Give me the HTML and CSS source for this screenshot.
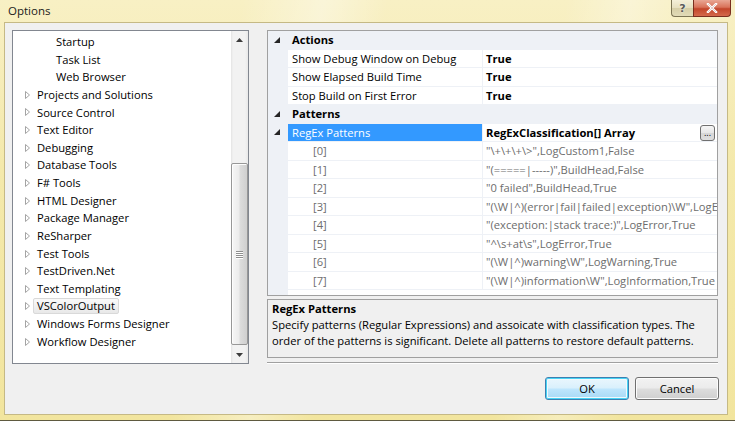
FILE: index.html
```html
<!DOCTYPE html>
<html>
<head>
<meta charset="utf-8">
<link rel="stylesheet" href="styles.css">
</head>
<body>
<div class="window">
  <div class="titlebar">
    <span class="title">Options</span>
    <div class="caption-btns">
      <div class="cbtn help">?</div>
      <div class="cbtn close">
        <svg width="12" height="10" viewBox="0 0 12 10"><path d="M2 1 L10 9 M10 1 L2 9" stroke="#fff" stroke-width="2.4" stroke-linecap="square"/><path d="M2 1 L10 9 M10 1 L2 9" stroke="#6b1d12" stroke-width="0.6" opacity="0.35"/></svg>
      </div>
    </div>
  </div>
  <div class="client">
    <div class="main">
      <div class="tree">
        <ul class="tree-list">
          <li class="tnode child">Startup</li>
          <li class="tnode child">Task List</li>
          <li class="tnode child">Web Browser</li>
          <li class="tnode"><span class="exp"><svg width="5" height="8" viewBox="0 0 5 8"><polygon points="0.5,0.5 4.5,4 0.5,7.5" fill="#fff" stroke="#a4a4a4"/></svg></span><span class="lbl">Projects and Solutions</span></li>
          <li class="tnode"><span class="exp"><svg width="5" height="8" viewBox="0 0 5 8"><polygon points="0.5,0.5 4.5,4 0.5,7.5" fill="#fff" stroke="#a4a4a4"/></svg></span><span class="lbl">Source Control</span></li>
          <li class="tnode"><span class="exp"><svg width="5" height="8" viewBox="0 0 5 8"><polygon points="0.5,0.5 4.5,4 0.5,7.5" fill="#fff" stroke="#a4a4a4"/></svg></span><span class="lbl">Text Editor</span></li>
          <li class="tnode"><span class="exp"><svg width="5" height="8" viewBox="0 0 5 8"><polygon points="0.5,0.5 4.5,4 0.5,7.5" fill="#fff" stroke="#a4a4a4"/></svg></span><span class="lbl">Debugging</span></li>
          <li class="tnode"><span class="exp"><svg width="5" height="8" viewBox="0 0 5 8"><polygon points="0.5,0.5 4.5,4 0.5,7.5" fill="#fff" stroke="#a4a4a4"/></svg></span><span class="lbl">Database Tools</span></li>
          <li class="tnode"><span class="exp"><svg width="5" height="8" viewBox="0 0 5 8"><polygon points="0.5,0.5 4.5,4 0.5,7.5" fill="#fff" stroke="#a4a4a4"/></svg></span><span class="lbl">F# Tools</span></li>
          <li class="tnode"><span class="exp"><svg width="5" height="8" viewBox="0 0 5 8"><polygon points="0.5,0.5 4.5,4 0.5,7.5" fill="#fff" stroke="#a4a4a4"/></svg></span><span class="lbl">HTML Designer</span></li>
          <li class="tnode"><span class="exp"><svg width="5" height="8" viewBox="0 0 5 8"><polygon points="0.5,0.5 4.5,4 0.5,7.5" fill="#fff" stroke="#a4a4a4"/></svg></span><span class="lbl">Package Manager</span></li>
          <li class="tnode"><span class="exp"><svg width="5" height="8" viewBox="0 0 5 8"><polygon points="0.5,0.5 4.5,4 0.5,7.5" fill="#fff" stroke="#a4a4a4"/></svg></span><span class="lbl">ReSharper</span></li>
          <li class="tnode"><span class="exp"><svg width="5" height="8" viewBox="0 0 5 8"><polygon points="0.5,0.5 4.5,4 0.5,7.5" fill="#fff" stroke="#a4a4a4"/></svg></span><span class="lbl">Test Tools</span></li>
          <li class="tnode"><span class="exp"><svg width="5" height="8" viewBox="0 0 5 8"><polygon points="0.5,0.5 4.5,4 0.5,7.5" fill="#fff" stroke="#a4a4a4"/></svg></span><span class="lbl">TestDriven.Net</span></li>
          <li class="tnode"><span class="exp"><svg width="5" height="8" viewBox="0 0 5 8"><polygon points="0.5,0.5 4.5,4 0.5,7.5" fill="#fff" stroke="#a4a4a4"/></svg></span><span class="lbl">Text Templating</span></li>
          <li class="tnode"><span class="exp"><svg width="5" height="8" viewBox="0 0 5 8"><polygon points="0.5,0.5 4.5,4 0.5,7.5" fill="#fff" stroke="#a4a4a4"/></svg></span><span class="lbl sel">VSColorOutput</span></li>
          <li class="tnode"><span class="exp"><svg width="5" height="8" viewBox="0 0 5 8"><polygon points="0.5,0.5 4.5,4 0.5,7.5" fill="#fff" stroke="#a4a4a4"/></svg></span><span class="lbl">Windows Forms Designer</span></li>
          <li class="tnode"><span class="exp"><svg width="5" height="8" viewBox="0 0 5 8"><polygon points="0.5,0.5 4.5,4 0.5,7.5" fill="#fff" stroke="#a4a4a4"/></svg></span><span class="lbl">Workflow Designer</span></li>
        </ul>
        <div class="vscroll">
          <div class="sb-arrow"><svg width="7" height="4" viewBox="0 0 7 4"><polygon points="3.5,0 7,4 0,4" fill="#3c3c3c"/></svg></div>
          <div class="sb-track">
            <div class="sb-thumb"><div class="grip"><i></i><i></i><i></i><i></i></div></div>
          </div>
          <div class="sb-arrow"><svg width="7" height="4" viewBox="0 0 7 4"><polygon points="0,0 7,0 3.5,4" fill="#3c3c3c"/></svg></div>
        </div>
      </div>
      <div class="right">
        <div class="pgrid">
          <div class="prow cat">
            <div class="pm"><svg width="6" height="6" viewBox="0 0 6 6"><polygon points="6,0 6,6 0,6" fill="#262626"/></svg></div>
            <div class="pn">Actions</div>
          </div>
          <div class="prow">
            <div class="pm"></div>
            <div class="pn">Show Debug Window on Debug</div>
            <div class="pv b">True</div>
          </div>
          <div class="prow">
            <div class="pm"></div>
            <div class="pn">Show Elapsed Build Time</div>
            <div class="pv b">True</div>
          </div>
          <div class="prow">
            <div class="pm"></div>
            <div class="pn">Stop Build on First Error</div>
            <div class="pv b">True</div>
          </div>
          <div class="prow cat">
            <div class="pm"><svg width="6" height="6" viewBox="0 0 6 6"><polygon points="6,0 6,6 0,6" fill="#262626"/></svg></div>
            <div class="pn">Patterns</div>
          </div>
          <div class="prow">
            <div class="pm"><svg width="6" height="6" viewBox="0 0 6 6"><polygon points="6,0 6,6 0,6" fill="#262626"/></svg></div>
            <div class="pn selected">RegEx Patterns</div>
            <div class="pv b">RegExClassification[] Array<span class="dots">...</span></div>
          </div>
          <div class="prow ro"><div class="pm"></div><div class="pn sub">[0]</div><div class="pv">"\+\+\+\&gt;",LogCustom1,False</div></div>
          <div class="prow ro"><div class="pm"></div><div class="pn sub">[1]</div><div class="pv">"(=====|-----)",BuildHead,False</div></div>
          <div class="prow ro"><div class="pm"></div><div class="pn sub">[2]</div><div class="pv">"0 failed",BuildHead,True</div></div>
          <div class="prow ro"><div class="pm"></div><div class="pn sub">[3]</div><div class="pv">"(\W|^)(error|fail|failed|exception)\W",LogError,True</div></div>
          <div class="prow ro"><div class="pm"></div><div class="pn sub">[4]</div><div class="pv">"(exception:|stack trace:)",LogError,True</div></div>
          <div class="prow ro"><div class="pm"></div><div class="pn sub">[5]</div><div class="pv">"^\s+at\s",LogError,True</div></div>
          <div class="prow ro"><div class="pm"></div><div class="pn sub">[6]</div><div class="pv">"(\W|^)warning\W",LogWarning,True</div></div>
          <div class="prow ro"><div class="pm"></div><div class="pn sub">[7]</div><div class="pv">"(\W|^)information\W",LogInformation,True</div></div>
          <div class="pfill"><div class="pm"></div><div class="pn"></div><div class="pv"></div></div>
        </div>
        <div class="desc">
          <div class="desc-title">RegEx Patterns</div>
          <div class="desc-text">Specify patterns (Regular Expressions) and assoicate with classification types. The<br>order of the patterns is significant. Delete all patterns to restore default patterns.</div>
        </div>
        <div class="sep"></div>
      </div>
    </div>
    <div class="footer">
      <button class="btn default">OK</button>
      <button class="btn">Cancel</button>
    </div>
  </div>
</div>
</body>
</html>
```

FILE: styles.css
```css
* { box-sizing: border-box; }
html, body { margin: 0; padding: 0; }
body {
  width: 735px;
  height: 421px;
  overflow: hidden;
  font-family: "Open Sans", "Noto Sans", sans-serif;
  font-size: 11.2px;
  color: #000;
  background: #f3e8a8;
}
.window {
  width: 735px;
  height: 421px;
  display: flex;
  flex-direction: column;
  padding: 0 7px 5px 4px;
  border-bottom: 1px solid #5f5a40;
  background:
    linear-gradient(100deg, rgba(255,255,255,0) 30%, rgba(255,255,255,0.35) 40%, rgba(255,255,255,0) 48%, rgba(255,255,255,0) 70%, rgba(255,255,255,0.3) 78%, rgba(255,255,255,0) 86%),
    linear-gradient(180deg, #f8f0c4 0%, #f4e9ab 40%, #f2e59e 100%);
}
.titlebar {
  height: 22px;
  flex: none;
  display: flex;
  align-items: flex-start;
}
.title {
  padding: 3px 0 0 4px;
  font-size: 11.5px;
  line-height: 16px;
  color: #1a1a1a;
}
.caption-btns {
  margin-left: auto;
  margin-right: -3px;
  display: flex;
}
.cbtn {
  height: 17px;
  border: 1px solid #7c7454;
  border-top: none;
  display: flex;
  align-items: center;
  justify-content: center;
}
.help {
  width: 22px;
  border-radius: 0 0 0 4px;
  border-right: none;
  background: linear-gradient(180deg, #f4efd8 0%, #e6dfbf 50%, #d6cea6 51%, #e2dbb8 100%);
  color: #5a5a5a;
  font-family: "DejaVu Sans", sans-serif;
  font-size: 11px;
  font-weight: bold;
  text-shadow: 0 0 2px #fff;
}
.close {
  width: 38px;
  border-radius: 0 0 4px 0;
  background: linear-gradient(180deg, #e9a794 0%, #d9735a 45%, #c2452a 55%, #d4694b 100%);
  border-color: #7a2e1e;
}
.client {
  flex: 1;
  background: #f0f0f0;
  border: 1px solid #c5b985;
  padding: 7px 9px 0 7px;
  display: flex;
  flex-direction: column;
}
.main {
  display: flex;
  gap: 18px;
  height: 334px;
}
.tree {
  width: 237px;
  height: 334px;
  border: 1px solid #828790;
  background: #fff;
  display: flex;
}
.tree-list {
  list-style: none;
  margin: 0;
  padding: 2px 0 0 0;
  flex: 1;
}
.tnode {
  height: 17.65px;
  line-height: 17.65px;
  display: flex;
  align-items: center;
  white-space: nowrap;
}
.tnode.child { padding-left: 43px; }
.exp {
  width: 24px;
  padding-left: 12px;
  display: flex;
  align-items: center;
}
.lbl {
  padding: 0 3px 0 0;
}
.lbl.sel {
  margin-left: -4px;
  padding: 0 3px 0 3px;
  line-height: 14px;
  border: 1px solid #d9d9d9;
  border-radius: 2px;
  background: linear-gradient(180deg, #fafafa, #e8e8e8);
}
.vscroll {
  width: 17px;
  display: flex;
  flex-direction: column;
  background: linear-gradient(90deg, #e3e3e3 0, #f2f2f2 2px, #f2f2f2 14px, #e8e8e8 17px);
}
.sb-arrow {
  height: 17px;
  display: flex;
  align-items: center;
  justify-content: center;
}
.sb-track {
  flex: 1;
  display: flex;
  flex-direction: column;
  justify-content: flex-end;
  padding-bottom: 1px;
}
.sb-thumb {
  height: 182px;
  margin: 0 0 0 0;
  border: 1px solid #979797;
  border-radius: 2px;
  background: linear-gradient(90deg, #f6f6f6 0%, #ececec 45%, #dcdcdc 55%, #cfcfcf 100%);
  box-shadow: inset 1px 1px 0 #fdfdfd;
  display: flex;
  align-items: center;
  justify-content: center;
}
.grip { display: flex; flex-direction: column; gap: 1px; }
.grip i {
  display: block;
  width: 7px;
  height: 1px;
  background: #8e8e8e;
  box-shadow: 0 1px 0 #fff;
}
.right {
  width: 451px;
  display: flex;
  flex-direction: column;
}
.pgrid {
  height: 267px;
  border: 1px solid #a0a0a0;
  background: #fff;
  display: flex;
  flex-direction: column;
  overflow: hidden;
}
.prow {
  height: 18.54px;
  flex: none;
  display: grid;
  grid-template-columns: 20px 194px 1px 1fr;
  border-bottom: 1px solid #eef1f6;
}
.prow .pm {
  background: #eef1f6;
  display: flex;
  align-items: center;
  justify-content: center;
  padding: 0 2px 0 0;
}
.prow .pn {
  padding-left: 4px;
  line-height: 17.5px;
  white-space: nowrap;
  overflow: hidden;
}
.prow .pv {
  grid-column: 4;
  padding-left: 3px;
  line-height: 17.5px;
  white-space: nowrap;
  overflow: hidden;
  position: relative;
}
.prow::after { content: none; }
.prow .pn + .pv { border-left: 1px solid #eef1f6; margin-left: -1px; }
.prow.cat {
  background: #eef1f6;
}
.prow.cat .pn { font-weight: bold; }
.b { font-weight: bold; }
.pn.selected {
  background: #3399ff;
  color: #fff;
}
.pn.sub { padding-left: 25px; }
.prow.ro .pn, .prow.ro .pv { color: #6d6d6d; }
.dots {
  position: absolute;
  right: 2px;
  top: 1px;
  width: 15px;
  height: 16px;
  border: 1px solid #707070;
  border-radius: 3px;
  background: linear-gradient(180deg, #f6f6f6 0%, #e6e6e6 50%, #d6d6d6 51%, #dedede 100%);
  font-weight: normal;
  font-size: 9px;
  line-height: 13px;
  text-align: center;
  color: #000;
}
.pfill {
  flex: 1;
  display: grid;
  grid-template-columns: 20px 194px 1px 1fr;
}
.pfill .pm { background: #eef1f6; }
.desc {
  margin-top: 3px;
  height: 59px;
  border: 1px solid #a0a0a0;
  background: #f0f0f0;
  padding: 1px 4px 0 4px;
  line-height: 16px;
}
.desc-title { font-weight: bold; }
.sep {
  margin-top: 4px;
  height: 2px;
  border-top: 1px solid #a0a0a0;
  border-bottom: 1px solid #fff;
}
.footer {
  display: flex;
  justify-content: flex-end;
  gap: 6px;
  margin-top: 13px;
  margin-right: -1px;
}
.btn {
  width: 84px;
  height: 23px;
  font-family: inherit;
  font-size: 11.2px;
  color: #000;
  border: 1px solid #707070;
  border-radius: 3px;
  background: linear-gradient(180deg, #f2f2f2 0%, #ebebeb 48%, #dddddd 52%, #cfcfcf 100%);
  box-shadow: inset 0 0 0 1px #fcfcfc;
  padding: 0;
}
.btn.default {
  border-color: #3c7fb1;
  box-shadow: inset 0 0 0 1px #48d4f5, inset 0 0 0 2px #f2f8fb;
  background: linear-gradient(180deg, #eaf6fd 0%, #d9f0fc 48%, #bee6fd 52%, #a7d9f5 100%);
}
```
